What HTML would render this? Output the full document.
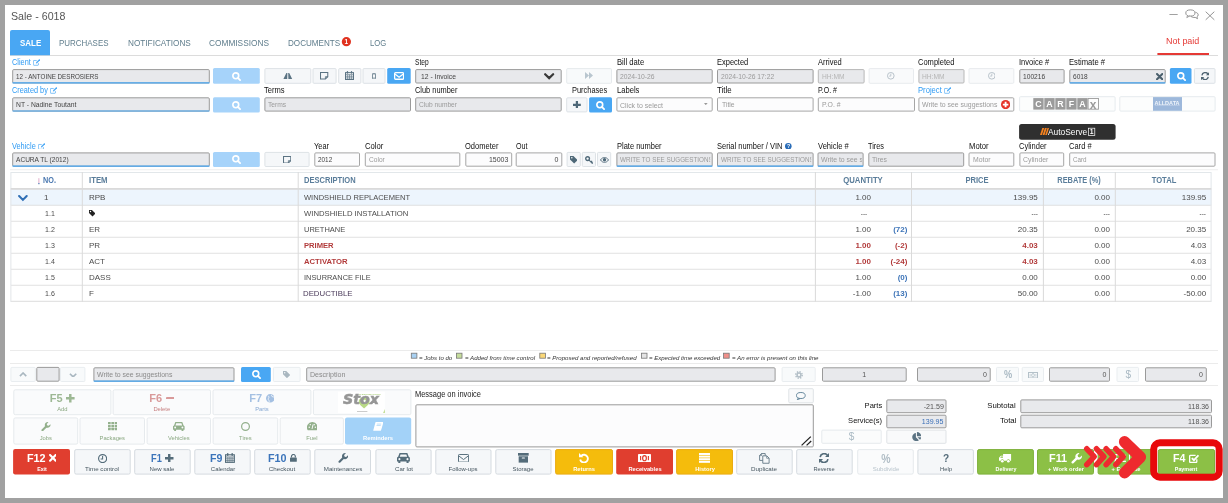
<!DOCTYPE html>
<html lang="en"><head><meta charset="utf-8"><title>Sale - 6018</title><style>
html,body{margin:0;padding:0}
body{width:1228px;height:503px;background:#a1a1a1;overflow:hidden;position:relative;font-family:"Liberation Sans",sans-serif;}
#w{position:absolute;left:0;top:0;width:1228px;height:503px;will-change:transform;}
#w>div,#w>span{position:absolute;box-sizing:border-box}
.t{position:absolute;white-space:nowrap;line-height:1;}
div>div{position:absolute}
</style></head><body><div id="w">
<svg style="position:absolute;left:0;top:0" width="1228" height="503" viewBox="0 0 1228 503"><rect x="5.00" y="5.00" width="1218.00" height="493.00" fill="#fff"/><rect x="1169.40" y="14.00" width="8.30" height="0.80" fill="#8a8a8a"/><rect x="10.00" y="55.00" width="1208.00" height="1.00" fill="#dcdcdc"/><path d="M10.00 55.30V32.00q0-2.0 2.0-2.0H48.00q2.0 0 2.0 2.0V55.30z" fill="#49a7f3"/><ellipse cx="346.40" cy="41.70" rx="4.60" ry="4.60" fill="#e0321f"/><rect x="1157.40" y="53.00" width="51.60" height="2.00" fill="#e53935"/><rect x="12.70" y="69.60" width="196.60" height="13.40" rx="1.00" fill="#e8e9ec" stroke="#9a9a9a" stroke-width="1.0"/><path d="M12.50 82.90H209.50" stroke="#49a7f3" stroke-width="1.2" fill="none"/><rect x="213.00" y="68.10" width="46.80" height="15.70" rx="1.5" fill="#a6d3fa"/><rect x="264.90" y="68.60" width="45.90" height="14.70" rx="1.00" fill="#f5f7f9" stroke="#dde2e6" stroke-width="1.0"/><rect x="313.00" y="68.60" width="23.10" height="14.70" rx="1.00" fill="#f5f7f9" stroke="#dde2e6" stroke-width="1.0"/><rect x="338.70" y="68.60" width="22.20" height="14.70" rx="1.00" fill="#f5f7f9" stroke="#dde2e6" stroke-width="1.0"/><rect x="363.00" y="68.60" width="22.00" height="14.70" rx="1.00" fill="#f5f7f9" stroke="#dde2e6" stroke-width="1.0"/><rect x="387.20" y="68.10" width="23.50" height="15.70" rx="1.5" fill="#49a7f3"/><rect x="415.70" y="69.60" width="145.50" height="13.40" rx="1.00" fill="#e8e9ec" stroke="#9a9a9a" stroke-width="1.0"/><rect x="566.70" y="68.60" width="44.80" height="14.70" rx="1.00" fill="#f8fafb" stroke="#e6eaed" stroke-width="1.0"/><rect x="616.90" y="69.60" width="95.30" height="13.40" rx="1.00" fill="#e8e9ec" stroke="#9a9a9a" stroke-width="1.0"/><rect x="717.50" y="69.60" width="95.60" height="13.40" rx="1.00" fill="#e8e9ec" stroke="#9a9a9a" stroke-width="1.0"/><rect x="818.30" y="69.60" width="45.80" height="13.40" rx="1.00" fill="#e8e9ec" stroke="#b8b8b8" stroke-width="1.0"/><rect x="869.10" y="68.60" width="44.40" height="14.70" rx="1.00" fill="#f9fafb" stroke="#e8ebee" stroke-width="1.0"/><rect x="918.90" y="69.60" width="45.10" height="13.40" rx="1.00" fill="#e8e9ec" stroke="#b8b8b8" stroke-width="1.0"/><rect x="969.00" y="68.60" width="44.80" height="14.70" rx="1.00" fill="#f9fafb" stroke="#e8ebee" stroke-width="1.0"/><rect x="1019.80" y="69.60" width="44.30" height="13.40" rx="1.00" fill="#e8e9ec" stroke="#9a9a9a" stroke-width="1.0"/><rect x="1069.80" y="69.60" width="95.40" height="13.40" rx="1.00" fill="#e8e9ec" stroke="#9a9a9a" stroke-width="1.0"/><path d="M1069.60 82.90H1165.40" stroke="#49a7f3" stroke-width="1.2" fill="none"/><rect x="1169.90" y="68.10" width="21.60" height="15.70" rx="1.5" fill="#49a7f3"/><rect x="1194.40" y="68.60" width="20.60" height="14.70" rx="1.00" fill="#f5f7f9" stroke="#dde2e6" stroke-width="1.0"/><rect x="12.70" y="97.80" width="196.60" height="13.30" rx="1.00" fill="#e8e9ec" stroke="#9a9a9a" stroke-width="1.0"/><path d="M12.50 111.00H209.50" stroke="#49a7f3" stroke-width="1.2" fill="none"/><rect x="213.00" y="97.30" width="46.80" height="15.10" rx="1.5" fill="#a6d3fa"/><rect x="264.90" y="97.80" width="145.60" height="13.30" rx="1.00" fill="#e8e9ec" stroke="#9a9a9a" stroke-width="1.0"/><rect x="415.70" y="97.80" width="145.50" height="13.30" rx="1.00" fill="#e8e9ec" stroke="#9a9a9a" stroke-width="1.0"/><rect x="566.70" y="97.80" width="20.30" height="14.10" rx="1.00" fill="#f5f7f9" stroke="#dde2e6" stroke-width="1.0"/><rect x="589.10" y="97.30" width="22.90" height="15.10" rx="1.5" fill="#49a7f3"/><rect x="616.90" y="97.80" width="95.30" height="13.30" rx="1.00" fill="#fcfcfd" stroke="#a6a6a6" stroke-width="1.0"/><rect x="717.50" y="97.80" width="95.60" height="13.30" rx="1.00" fill="#fcfcfd" stroke="#a6a6a6" stroke-width="1.0"/><rect x="818.30" y="97.80" width="96.20" height="13.30" rx="1.00" fill="#fcfcfd" stroke="#a6a6a6" stroke-width="1.0"/><rect x="918.90" y="97.80" width="94.90" height="13.30" rx="1.00" fill="#fcfcfd" stroke="#a6a6a6" stroke-width="1.0"/><rect x="1019.60" y="96.70" width="95.50" height="14.40" rx="1.00" fill="#fcfdfd" stroke="#e6ebee" stroke-width="1.0"/><rect x="1119.80" y="96.70" width="95.30" height="14.40" rx="1.00" fill="#fcfdfd" stroke="#e6ebee" stroke-width="1.0"/><rect x="1153.00" y="97.10" width="29.00" height="13.70" fill="#9db8db"/><rect x="1154.80" y="105.30" width="25.00" height="0.50" fill="#c9d7eb"/><rect x="1019.10" y="123.90" width="96.50" height="15.90" rx="2.5" fill="#2f2f2f"/><rect x="12.70" y="152.90" width="196.60" height="13.30" rx="1.00" fill="#e8e9ec" stroke="#9a9a9a" stroke-width="1.0"/><path d="M12.50 166.10H209.50" stroke="#49a7f3" stroke-width="1.2" fill="none"/><rect x="213.00" y="151.90" width="46.80" height="15.10" rx="1.5" fill="#a6d3fa"/><rect x="264.90" y="152.40" width="44.20" height="14.10" rx="1.00" fill="#f5f7f9" stroke="#dde2e6" stroke-width="1.0"/><rect x="314.80" y="152.90" width="44.70" height="13.30" rx="1.00" fill="#fcfcfd" stroke="#a6a6a6" stroke-width="1.0"/><rect x="365.30" y="152.90" width="94.50" height="13.30" rx="1.00" fill="#fcfcfd" stroke="#a6a6a6" stroke-width="1.0"/><rect x="465.80" y="152.90" width="45.90" height="13.30" rx="1.00" fill="#fcfcfd" stroke="#a6a6a6" stroke-width="1.0"/><rect x="516.20" y="152.90" width="45.60" height="13.30" rx="1.00" fill="#fcfcfd" stroke="#a6a6a6" stroke-width="1.0"/><rect x="567.10" y="152.40" width="13.20" height="14.10" rx="1.00" fill="#f5f7f9" stroke="#dde2e6" stroke-width="1.0"/><rect x="582.30" y="152.40" width="13.20" height="14.10" rx="1.00" fill="#f5f7f9" stroke="#dde2e6" stroke-width="1.0"/><rect x="597.50" y="152.40" width="13.20" height="14.10" rx="1.00" fill="#f5f7f9" stroke="#dde2e6" stroke-width="1.0"/><rect x="616.90" y="152.90" width="95.30" height="13.30" rx="1.00" fill="#e8e9ec" stroke="#9a9a9a" stroke-width="1.0"/><path d="M616.70 166.10H712.40" stroke="#49a7f3" stroke-width="1.2" fill="none"/><rect x="717.50" y="152.90" width="95.60" height="13.30" rx="1.00" fill="#e8e9ec" stroke="#9a9a9a" stroke-width="1.0"/><path d="M717.30 166.10H813.30" stroke="#49a7f3" stroke-width="1.2" fill="none"/><rect x="818.00" y="152.90" width="45.10" height="13.30" rx="1.00" fill="#e8e9ec" stroke="#9a9a9a" stroke-width="1.0"/><path d="M817.80 166.10H863.30" stroke="#49a7f3" stroke-width="1.2" fill="none"/><rect x="868.80" y="152.90" width="94.90" height="13.30" rx="1.00" fill="#e8e9ec" stroke="#9a9a9a" stroke-width="1.0"/><rect x="969.00" y="152.90" width="44.80" height="13.30" rx="1.00" fill="#fcfcfd" stroke="#a6a6a6" stroke-width="1.0"/><rect x="1019.90" y="152.90" width="43.80" height="13.30" rx="1.00" fill="#fcfcfd" stroke="#a6a6a6" stroke-width="1.0"/><rect x="1069.70" y="152.90" width="145.30" height="13.30" rx="1.00" fill="#fcfcfd" stroke="#a6a6a6" stroke-width="1.0"/><rect x="10.00" y="169.40" width="1208.00" height="0.80" fill="#e9e9e9"/><rect x="10.90" y="172.50" width="1200.20" height="17.00" rx="0.00" fill="#fff" stroke="#e2e7ea" stroke-width="1.0"/><path d="M10.70 189.00H1211.30" stroke="#dadada" stroke-width="2.0" fill="none"/><rect x="38.50" y="178.20" width="0.80" height="5.00" fill="#d99abf"/><rect x="38.30" y="183.00" width="1.20" height="1.20" fill="#4a78b0"/><rect x="10.40" y="189.80" width="1201.20" height="16.00" fill="#edf5fd"/><path d="M10.70 205.30H1211.30" stroke="#dcdcdc" stroke-width="1.0" fill="none"/><path d="M10.90 189.80V205.80" stroke="#e2e5e8" stroke-width="1.0" fill="none"/><path d="M1211.10 189.80V205.80" stroke="#e2e5e8" stroke-width="1.0" fill="none"/><rect x="10.40" y="205.80" width="1201.20" height="16.00" fill="#fff"/><path d="M10.70 221.30H1211.30" stroke="#dcdcdc" stroke-width="1.0" fill="none"/><path d="M10.90 205.80V221.80" stroke="#e2e5e8" stroke-width="1.0" fill="none"/><path d="M1211.10 205.80V221.80" stroke="#e2e5e8" stroke-width="1.0" fill="none"/><rect x="10.40" y="221.80" width="1201.20" height="16.00" fill="#fff"/><path d="M10.70 237.30H1211.30" stroke="#dcdcdc" stroke-width="1.0" fill="none"/><path d="M10.90 221.80V237.80" stroke="#e2e5e8" stroke-width="1.0" fill="none"/><path d="M1211.10 221.80V237.80" stroke="#e2e5e8" stroke-width="1.0" fill="none"/><rect x="10.40" y="237.80" width="1201.20" height="16.00" fill="#fff"/><path d="M10.70 253.30H1211.30" stroke="#dcdcdc" stroke-width="1.0" fill="none"/><path d="M10.90 237.80V253.80" stroke="#e2e5e8" stroke-width="1.0" fill="none"/><path d="M1211.10 237.80V253.80" stroke="#e2e5e8" stroke-width="1.0" fill="none"/><rect x="10.40" y="253.80" width="1201.20" height="16.00" fill="#fff"/><path d="M10.70 269.30H1211.30" stroke="#dcdcdc" stroke-width="1.0" fill="none"/><path d="M10.90 253.80V269.80" stroke="#e2e5e8" stroke-width="1.0" fill="none"/><path d="M1211.10 253.80V269.80" stroke="#e2e5e8" stroke-width="1.0" fill="none"/><rect x="10.40" y="269.80" width="1201.20" height="16.00" fill="#fff"/><path d="M10.70 285.30H1211.30" stroke="#dcdcdc" stroke-width="1.0" fill="none"/><path d="M10.90 269.80V285.80" stroke="#e2e5e8" stroke-width="1.0" fill="none"/><path d="M1211.10 269.80V285.80" stroke="#e2e5e8" stroke-width="1.0" fill="none"/><rect x="10.40" y="285.80" width="1201.20" height="16.00" fill="#fff"/><path d="M10.70 301.30H1211.30" stroke="#dcdcdc" stroke-width="1.0" fill="none"/><path d="M10.90 285.80V301.80" stroke="#e2e5e8" stroke-width="1.0" fill="none"/><path d="M1211.10 285.80V301.80" stroke="#e2e5e8" stroke-width="1.0" fill="none"/><rect x="81.80" y="172.00" width="1.00" height="129.60" fill="#dadada"/><rect x="297.70" y="172.00" width="1.00" height="129.60" fill="#dadada"/><rect x="814.90" y="172.00" width="1.00" height="129.60" fill="#dadada"/><rect x="911.00" y="172.00" width="1.00" height="129.60" fill="#dadada"/><rect x="1042.90" y="172.00" width="1.00" height="129.60" fill="#dadada"/><rect x="1114.80" y="172.00" width="1.00" height="129.60" fill="#dadada"/><rect x="10.00" y="350.20" width="1208.00" height="0.80" fill="#e6e6e6"/><rect x="10.00" y="363.20" width="1208.00" height="0.80" fill="#e6e6e6"/><rect x="10.00" y="385.20" width="1208.00" height="0.80" fill="#e6e6e6"/><rect x="10.90" y="367.40" width="24.40" height="14.10" rx="1.00" fill="#f8fafb" stroke="#e9edf0" stroke-width="1.0"/><rect x="36.80" y="367.40" width="22.30" height="13.80" rx="1.00" fill="#e8e9ec" stroke="#9a9a9a" stroke-width="1.0"/><rect x="60.50" y="367.40" width="24.40" height="14.10" rx="1.00" fill="#f8fafb" stroke="#e9edf0" stroke-width="1.0"/><rect x="93.90" y="367.80" width="140.10" height="13.40" rx="1.00" fill="#e8e9ec" stroke="#9a9a9a" stroke-width="1.0"/><path d="M93.70 381.10H234.20" stroke="#49a7f3" stroke-width="1.2" fill="none"/><rect x="241.00" y="366.90" width="29.80" height="15.10" rx="1.5" fill="#49a7f3"/><rect x="273.40" y="367.40" width="26.70" height="14.10" rx="1.00" fill="#f8fafb" stroke="#e9edf0" stroke-width="1.0"/><rect x="306.70" y="367.80" width="468.40" height="13.40" rx="1.00" fill="#e8e9ec" stroke="#9a9a9a" stroke-width="1.0"/><rect x="782.10" y="367.40" width="33.10" height="14.10" rx="1.00" fill="#f8fafb" stroke="#e9edf0" stroke-width="1.0"/><rect x="822.50" y="367.80" width="83.70" height="13.40" rx="1.00" fill="#e8e9ec" stroke="#9a9a9a" stroke-width="1.0"/><rect x="917.50" y="367.80" width="72.70" height="13.40" rx="1.00" fill="#e8e9ec" stroke="#9a9a9a" stroke-width="1.0"/><rect x="996.50" y="367.40" width="22.00" height="14.10" rx="1.00" fill="#f8fafb" stroke="#e9edf0" stroke-width="1.0"/><rect x="1022.20" y="367.40" width="21.30" height="14.10" rx="1.00" fill="#f8fafb" stroke="#e9edf0" stroke-width="1.0"/><rect x="1049.50" y="367.80" width="60.00" height="13.40" rx="1.00" fill="#e8e9ec" stroke="#9a9a9a" stroke-width="1.0"/><rect x="1117.00" y="367.40" width="21.50" height="14.10" rx="1.00" fill="#f8fafb" stroke="#e9edf0" stroke-width="1.0"/><rect x="1145.50" y="367.80" width="60.80" height="13.40" rx="1.00" fill="#e8e9ec" stroke="#9a9a9a" stroke-width="1.0"/><rect x="13.80" y="389.80" width="97.10" height="24.90" rx="1.50" fill="#fafbfc" stroke="#e6eaed" stroke-width="1.0"/><rect x="113.10" y="389.80" width="97.40" height="24.90" rx="1.50" fill="#fafbfc" stroke="#e6eaed" stroke-width="1.0"/><rect x="213.00" y="389.80" width="97.90" height="24.90" rx="1.50" fill="#fafbfc" stroke="#e6eaed" stroke-width="1.0"/><rect x="313.40" y="389.80" width="97.50" height="24.90" rx="1.50" fill="#fafbfc" stroke="#e6eaed" stroke-width="1.0"/><rect x="337.90" y="391.60" width="46.90" height="21.40" fill="#fff"/><rect x="357.00" y="411.10" width="10.40" height="0.60" fill="#a8a8a8"/><rect x="13.80" y="417.90" width="63.90" height="26.20" rx="1.50" fill="#fafbfc" stroke="#e6eaed" stroke-width="1.0"/><rect x="80.00" y="417.90" width="64.50" height="26.20" rx="1.50" fill="#fafbfc" stroke="#e6eaed" stroke-width="1.0"/><rect x="147.10" y="417.90" width="63.40" height="26.20" rx="1.50" fill="#fafbfc" stroke="#e6eaed" stroke-width="1.0"/><rect x="213.10" y="417.90" width="64.60" height="26.20" rx="1.50" fill="#fafbfc" stroke="#e6eaed" stroke-width="1.0"/><rect x="280.20" y="417.90" width="63.20" height="26.20" rx="1.50" fill="#fafbfc" stroke="#e6eaed" stroke-width="1.0"/><rect x="345.00" y="417.40" width="66.20" height="27.20" rx="2.0" fill="#a3d2f8"/><rect x="788.80" y="388.70" width="24.50" height="14.10" rx="1.00" fill="#f9fafb" stroke="#dfe3e6" stroke-width="1.0"/><rect x="415.90" y="404.80" width="397.40" height="42.10" rx="1.00" fill="#fcfcfd" stroke="#9a9a9a" stroke-width="1.0"/><rect x="886.80" y="399.90" width="59.20" height="12.80" rx="1.00" fill="#e8e9ec" stroke="#9a9a9a" stroke-width="1.0"/><rect x="886.80" y="415.20" width="59.20" height="12.60" rx="1.00" fill="#e8e9ec" stroke="#9a9a9a" stroke-width="1.0"/><rect x="821.80" y="430.10" width="59.40" height="13.20" rx="1.00" fill="#fbfcfc" stroke="#e6eaed" stroke-width="1.0"/><rect x="886.80" y="430.10" width="59.20" height="13.20" rx="1.00" fill="#f9fafb" stroke="#dfe3e6" stroke-width="1.0"/><rect x="1020.80" y="399.90" width="190.70" height="12.80" rx="1.00" fill="#e8e9ec" stroke="#9a9a9a" stroke-width="1.0"/><rect x="1020.80" y="415.20" width="190.70" height="12.60" rx="1.00" fill="#e8e9ec" stroke="#9a9a9a" stroke-width="1.0"/><rect x="13.10" y="449.10" width="56.90" height="25.50" rx="2.0" fill="#e03e2f"/><rect x="74.70" y="449.60" width="55.50" height="24.50" rx="1.50" fill="#f5f7f9" stroke="#d5dbe0" stroke-width="1.0"/><rect x="134.70" y="449.60" width="55.50" height="24.50" rx="1.50" fill="#f5f7f9" stroke="#d5dbe0" stroke-width="1.0"/><rect x="194.80" y="449.60" width="55.40" height="24.50" rx="1.50" fill="#f5f7f9" stroke="#d5dbe0" stroke-width="1.0"/><rect x="254.70" y="449.60" width="55.50" height="24.50" rx="1.50" fill="#f5f7f9" stroke="#d5dbe0" stroke-width="1.0"/><rect x="314.80" y="449.60" width="55.70" height="24.50" rx="1.50" fill="#f5f7f9" stroke="#d5dbe0" stroke-width="1.0"/><rect x="375.90" y="449.60" width="55.20" height="24.50" rx="1.50" fill="#f5f7f9" stroke="#d5dbe0" stroke-width="1.0"/><rect x="435.80" y="449.60" width="55.20" height="24.50" rx="1.50" fill="#f5f7f9" stroke="#d5dbe0" stroke-width="1.0"/><rect x="495.80" y="449.60" width="55.20" height="24.50" rx="1.50" fill="#f5f7f9" stroke="#d5dbe0" stroke-width="1.0"/><rect x="555.60" y="449.60" width="56.90" height="24.50" rx="1.50" fill="#f5bc0c" stroke="#eaab12" stroke-width="1.0"/><rect x="616.20" y="449.10" width="56.80" height="25.50" rx="2.0" fill="#e03e2f"/><rect x="676.60" y="449.60" width="55.90" height="24.50" rx="1.50" fill="#f5bc0c" stroke="#eaab12" stroke-width="1.0"/><rect x="736.70" y="449.60" width="55.50" height="24.50" rx="1.50" fill="#f5f7f9" stroke="#d5dbe0" stroke-width="1.0"/><rect x="796.70" y="449.60" width="55.50" height="24.50" rx="1.50" fill="#f5f7f9" stroke="#d5dbe0" stroke-width="1.0"/><rect x="857.70" y="449.60" width="55.60" height="24.50" rx="1.50" fill="#fafbfc" stroke="#e6eaed" stroke-width="1.0"/><rect x="917.90" y="449.60" width="55.50" height="24.50" rx="1.50" fill="#f5f7f9" stroke="#d5dbe0" stroke-width="1.0"/><rect x="977.60" y="449.60" width="55.80" height="24.50" rx="1.50" fill="#8cc046" stroke="#7db03a" stroke-width="1.0"/><rect x="1037.50" y="449.60" width="56.00" height="24.50" rx="1.50" fill="#8cc046" stroke="#7db03a" stroke-width="1.0"/><rect x="1098.10" y="449.60" width="55.40" height="24.50" rx="1.50" fill="#8cc046" stroke="#7db03a" stroke-width="1.0"/><rect x="1158.40" y="449.60" width="56.10" height="24.50" rx="1.50" fill="#8cc046" stroke="#7db03a" stroke-width="1.0"/></svg>
<span class="t" style="top:11.00px;font-size:10.9px;color:#555;left:10.60px;transform:scaleX(0.9766);transform-origin:0 50%;">Sale - 6018</span>
<svg style="position:absolute;left:1185px;top:8.5px" width="14" height="11" viewBox="0 0 14 11"><ellipse cx="5.4" cy="4" rx="4.6" ry="3.1" fill="#fff" stroke="#888" stroke-width=".9"/><path d="M2.6 6.4L1.8 8.6 4.6 7" fill="#fff" stroke="#888" stroke-width=".8"/><path d="M10.4 3.2c1.8.5 2.8 1.500 2.800 2.600 0 .9-.5 1.600-1.300 2.100l.6 1.800-2.300-1.300c-1.800.2-3.400-.2-4.400-1.200" fill="none" stroke="#888" stroke-width=".9"/></svg>
<svg style="position:absolute;left:1204.5px;top:11.3px" width="10" height="9.500" viewBox="0 0 10 9.500"><path d="M.7.7l8.600 8.100M9.300.7L.7 8.800" stroke="#888" stroke-width=".9" fill="none"/></svg>
<span class="t" style="top:38.00px;font-size:9.7px;color:#fff;font-weight:700;left:19.50px;transform:scaleX(0.8203);transform-origin:0 50%;">SALE</span>
<span class="t" style="top:38.00px;font-size:9.7px;color:#5f7d8c;left:59.20px;transform:scaleX(0.8209);transform-origin:0 50%;">PURCHASES</span>
<span class="t" style="top:38.00px;font-size:9.7px;color:#5f7d8c;left:127.60px;transform:scaleX(0.8476);transform-origin:0 50%;">NOTIFICATIONS</span>
<span class="t" style="top:38.00px;font-size:9.7px;color:#5f7d8c;left:209.00px;transform:scaleX(0.8573);transform-origin:0 50%;">COMMISSIONS</span>
<span class="t" style="top:38.00px;font-size:9.7px;color:#5f7d8c;left:287.70px;transform:scaleX(0.8360);transform-origin:0 50%;">DOCUMENTS</span>
<span class="t" style="top:38.00px;font-size:9.7px;color:#5f7d8c;left:370.00px;transform:scaleX(0.7915);transform-origin:0 50%;">LOG</span>
<span class="t" style="top:39.00px;font-size:6.5px;color:#fff;font-weight:700;left:346.40px;transform:translateX(-50%);">1</span>
<span class="t" style="top:36.00px;font-size:9.5px;color:#e53935;left:1166.00px;transform:scaleX(0.9409);transform-origin:0 50%;">Not paid</span>
<span class="t" style="top:59.00px;font-size:8.2px;color:#2f9bf4;left:12.20px;transform:scaleX(0.8979);transform-origin:0 50%;">Client</span>
<svg style="position:absolute;left:32.70px;top:58.82px" width="7.40" height="6.75" viewBox="0 0 16 14.6"><path d="M11.800 9v3.400c0 .7-.5 1.200-1.200 1.200H2c-.7 0-1.200-.5-1.200-1.200V4.400c0-.7.500-1.200 1.200-1.200h6" fill="none" stroke="#2f9bf4" stroke-width="1.3"/><path fill="#2f9bf4" d="M13.800.2l2 2-7 7-2.600.6.600-2.600z" opacity=".85"/></svg>
<span class="t" style="top:73.00px;font-size:7.0px;color:#444;left:15.80px;transform:scaleX(0.8923);transform-origin:0 50%;">12 - ANTOINE DESROSIERS</span>
<svg style="position:absolute;left:232.20px;top:71.75px" width="9.00" height="9.00" viewBox="0 0 16 16"><circle cx="6.7" cy="6.7" r="5.2" fill="none" stroke="#fff" stroke-width="2.9"/><path d="M10.8 10.8L14.4 14.4" fill="none" stroke="#fff" stroke-width="3.2" stroke-linecap="round"/></svg>
<svg style="position:absolute;left:283.05px;top:72.53px" width="9.60" height="6.84" viewBox="0 0 16 11.4"><path fill="#5b7383" d="M5.600 0L0 11.400h7L7.300 0zM10.400 0L16 11.400H9L8.700 0z"/></svg>
<svg style="position:absolute;left:320.40px;top:72.21px" width="8.30" height="7.47" viewBox="0 0 16 14.4"><path d="M1 1h14v8l-4.600 4.400H1z" fill="none" stroke="#5b7383" stroke-width="2"/><path d="M10.400 13.400V9h4.600" fill="none" stroke="#5b7383" stroke-width="1.6"/></svg>
<svg style="position:absolute;left:345.30px;top:71.05px" width="9.00" height="9.00" viewBox="0 0 16 16"><rect x=".9" y="2.900" width="14.200" height="12.200" fill="none" stroke="#5b7383" stroke-width="1.8"/><path d="M.9 6.400h14.200M4.600 6.400v8.700M8 6.400v8.700M11.400 6.400v8.700M.9 9.400h14.200M.9 12.300h14.200" fill="none" stroke="#5b7383" stroke-width="1.1"/><rect fill="#5b7383" x="3.200" y="0" width="2.400" height="4.800" rx="1.200"/><rect fill="#5b7383" x="10.400" y="0" width="2.400" height="4.800" rx="1.200"/></svg>
<svg style="position:absolute;left:372.00px;top:72.75px" width="4.00" height="6.40" viewBox="0 0 10 16"><rect x="1.100" y="1.100" width="7.800" height="13.800" rx="1.800" fill="none" stroke="#5b7383" stroke-width="2"/><path d="M1.500 3.400h7M1.500 12h7" fill="none" stroke="#5b7383" stroke-width="1"/></svg>
<svg style="position:absolute;left:394.10px;top:72.15px" width="10.20" height="7.90" viewBox="0 0 16 12.4"><rect x="1" y="1" width="14" height="10.400" rx="1.400" fill="none" stroke="#fff" stroke-width="2"/><path d="M1.400 3.200L8 8.200l6.600-5" fill="none" stroke="#fff" stroke-width="2"/></svg>
<span class="t" style="top:59.00px;font-size:8.2px;color:#111;left:415.20px;transform:scaleX(0.8074);transform-origin:0 50%;">Step</span>
<span class="t" style="top:73.00px;font-size:7.0px;color:#444;left:420.60px;transform:scaleX(0.9672);transform-origin:0 50%;">12 - Invoice</span>
<svg style="position:absolute;left:544.25px;top:72.82px" width="10.30" height="6.76" viewBox="0 0 16 10.5"><path d="M1.800 1.800L8 8l6.200-6.200" fill="none" stroke="#383838" stroke-width="3.4" stroke-linecap="round" stroke-linejoin="miter"/></svg>
<svg style="position:absolute;left:584.70px;top:72.40px" width="8.00" height="7.00" viewBox="0 0 16 11" preserveAspectRatio="none"><path fill="#b9c6cf" d="M0 0L8 5.500 0 11zM8 0l8 5.500L8 11z"/></svg>
<span class="t" style="top:59.00px;font-size:8.2px;color:#111;left:616.50px;transform:scaleX(0.9334);transform-origin:0 50%;">Bill date</span>
<span class="t" style="top:73.00px;font-size:7.0px;color:#9a9a9a;left:620.20px;transform:scaleX(0.9661);transform-origin:0 50%;">2024-10-26</span>
<span class="t" style="top:59.00px;font-size:8.2px;color:#111;left:717.20px;transform:scaleX(0.9139);transform-origin:0 50%;">Expected</span>
<span class="t" style="top:73.00px;font-size:7.0px;color:#9a9a9a;left:721.00px;transform:scaleX(0.9624);transform-origin:0 50%;">2024-10-26 17:22</span>
<span class="t" style="top:59.00px;font-size:8.2px;color:#111;left:817.80px;transform:scaleX(0.9176);transform-origin:0 50%;">Arrived</span>
<span class="t" style="top:73.00px;font-size:7.0px;color:#b5b5b5;left:821.60px;transform:scaleX(0.9528);transform-origin:0 50%;">HH:MM</span>
<svg style="position:absolute;left:887.40px;top:72.20px" width="7.60" height="7.60" viewBox="0 0 16 16"><circle cx="8" cy="8" r="7" fill="none" stroke="#b5c0c8" stroke-width="2"/><path d="M8 3.600V8.600H4.600" fill="none" stroke="#b5c0c8" stroke-width="1.8"/></svg>
<span class="t" style="top:59.00px;font-size:8.2px;color:#111;left:918.20px;transform:scaleX(0.9190);transform-origin:0 50%;">Completed</span>
<span class="t" style="top:73.00px;font-size:7.0px;color:#b5b5b5;left:922.20px;transform:scaleX(0.9528);transform-origin:0 50%;">HH:MM</span>
<svg style="position:absolute;left:987.60px;top:72.20px" width="7.60" height="7.60" viewBox="0 0 16 16"><circle cx="8" cy="8" r="7" fill="none" stroke="#b5c0c8" stroke-width="2"/><path d="M8 3.600V8.600H4.600" fill="none" stroke="#b5c0c8" stroke-width="1.8"/></svg>
<span class="t" style="top:59.00px;font-size:8.2px;color:#111;left:1019.30px;transform:scaleX(0.9213);transform-origin:0 50%;">Invoice #</span>
<span class="t" style="top:73.00px;font-size:7.0px;color:#444;left:1023.00px;transform:scaleX(0.9504);transform-origin:0 50%;">100216</span>
<span class="t" style="top:59.00px;font-size:8.2px;color:#111;left:1069.30px;transform:scaleX(0.9305);transform-origin:0 50%;">Estimate #</span>
<span class="t" style="top:73.00px;font-size:7.0px;color:#444;left:1073.00px;transform:scaleX(0.9372);transform-origin:0 50%;">6018</span>
<svg style="position:absolute;left:1155.85px;top:72.85px" width="7.30" height="7.30" viewBox="0 0 16 16"><path d="M2.200 2.200L13.800 13.800M13.800 2.200L2.200 13.800" fill="none" stroke="#4a5f6c" stroke-width="4.4" stroke-linecap="round"/></svg>
<svg style="position:absolute;left:1176.50px;top:71.75px" width="9.00" height="9.00" viewBox="0 0 16 16"><circle cx="6.7" cy="6.7" r="5.2" fill="none" stroke="#fff" stroke-width="2.9"/><path d="M10.8 10.8L14.4 14.4" fill="none" stroke="#fff" stroke-width="3.2" stroke-linecap="round"/></svg>
<svg style="position:absolute;left:1200.80px;top:71.60px" width="8.20" height="8.20" viewBox="0 0 16 16"><path d="M14.200 9.600a6.400 6.400 0 0 1-11.600 2.600" fill="none" stroke="#4e6472" stroke-width="2.6"/><path d="M1.800 6.400a6.400 6.400 0 0 1 11.600-2.600" fill="none" stroke="#4e6472" stroke-width="2.6"/><path fill="#4e6472" d="M16 0v6.400H9.600z"/><path fill="#4e6472" d="M0 16V9.600h6.400z"/></svg>
<span class="t" style="top:87.00px;font-size:8.2px;color:#2f9bf4;left:12.20px;transform:scaleX(0.8936);transform-origin:0 50%;">Created by</span>
<svg style="position:absolute;left:49.70px;top:86.82px" width="7.40" height="6.75" viewBox="0 0 16 14.6"><path d="M11.800 9v3.400c0 .7-.5 1.200-1.200 1.200H2c-.7 0-1.200-.5-1.200-1.200V4.400c0-.7.500-1.200 1.200-1.200h6" fill="none" stroke="#2f9bf4" stroke-width="1.3"/><path fill="#2f9bf4" d="M13.800.2l2 2-7 7-2.600.6.600-2.600z" opacity=".85"/></svg>
<span class="t" style="top:101.00px;font-size:7.0px;color:#444;left:15.80px;transform:scaleX(0.9665);transform-origin:0 50%;">NT - Nadine Toutant</span>
<svg style="position:absolute;left:232.20px;top:100.65px" width="9.00" height="9.00" viewBox="0 0 16 16"><circle cx="6.7" cy="6.7" r="5.2" fill="none" stroke="#fff" stroke-width="2.9"/><path d="M10.8 10.8L14.4 14.4" fill="none" stroke="#fff" stroke-width="3.2" stroke-linecap="round"/></svg>
<span class="t" style="top:87.00px;font-size:8.2px;color:#111;left:264.40px;transform:scaleX(0.9239);transform-origin:0 50%;">Terms</span>
<span class="t" style="top:101.00px;font-size:7.0px;color:#9a9a9a;left:268.40px;transform:scaleX(0.9548);transform-origin:0 50%;">Terms</span>
<span class="t" style="top:87.00px;font-size:8.2px;color:#111;left:415.20px;transform:scaleX(0.9045);transform-origin:0 50%;">Club number</span>
<span class="t" style="top:101.00px;font-size:7.0px;color:#9a9a9a;left:418.60px;transform:scaleX(0.9481);transform-origin:0 50%;">Club number</span>
<span class="t" style="top:87.00px;font-size:8.2px;color:#111;left:571.50px;transform:scaleX(0.9099);transform-origin:0 50%;">Purchases</span>
<svg style="position:absolute;left:573.10px;top:100.60px" width="7.80" height="7.80" viewBox="0 0 16 16"><path fill="#4e6878" d="M5.7 0h4.6v5.7H16v4.6h-5.700V16H5.700v-5.700H0V5.700h5.700z"/></svg>
<svg style="position:absolute;left:596.35px;top:100.65px" width="9.00" height="9.00" viewBox="0 0 16 16"><circle cx="6.7" cy="6.7" r="5.2" fill="none" stroke="#fff" stroke-width="2.9"/><path d="M10.8 10.8L14.4 14.4" fill="none" stroke="#fff" stroke-width="3.2" stroke-linecap="round"/></svg>
<span class="t" style="top:87.00px;font-size:8.2px;color:#111;left:616.50px;transform:scaleX(0.9279);transform-origin:0 50%;">Labels</span>
<span class="t" style="top:102.00px;font-size:7.0px;color:#9a9a9a;left:620.00px;transform:scaleX(0.9957);transform-origin:0 50%;">Click to select</span>
<svg style="position:absolute;left:704.3px;top:103px" width="3.600" height="2.200" viewBox="0 0 5 3"><path d="M0 0h5L2.500 3z" fill="#999"/></svg>
<span class="t" style="top:87.00px;font-size:8.2px;color:#111;left:717.20px;transform:scaleX(0.9623);transform-origin:0 50%;">Title</span>
<span class="t" style="top:101.00px;font-size:7.0px;color:#9a9a9a;left:721.60px;transform:scaleX(0.9716);transform-origin:0 50%;">Title</span>
<span class="t" style="top:87.00px;font-size:8.2px;color:#111;left:817.80px;transform:scaleX(0.8575);transform-origin:0 50%;">P.O. #</span>
<span class="t" style="top:101.00px;font-size:7.0px;color:#9a9a9a;left:822.00px;transform:scaleX(0.9814);transform-origin:0 50%;">P.O. #</span>
<span class="t" style="top:87.00px;font-size:8.2px;color:#2f9bf4;left:918.20px;transform:scaleX(0.9339);transform-origin:0 50%;">Project</span>
<svg style="position:absolute;left:943.70px;top:86.82px" width="7.40" height="6.75" viewBox="0 0 16 14.6"><path d="M11.800 9v3.400c0 .7-.5 1.200-1.200 1.200H2c-.7 0-1.200-.5-1.200-1.200V4.400c0-.7.500-1.200 1.200-1.200h6" fill="none" stroke="#2f9bf4" stroke-width="1.3"/><path fill="#2f9bf4" d="M13.800.2l2 2-7 7-2.600.6.600-2.600z" opacity=".85"/></svg>
<span class="t" style="top:101.00px;font-size:7.0px;color:#9a9a9a;left:921.60px;transform:scaleX(0.9852);transform-origin:0 50%;">Write to see suggestions</span>
<svg style="position:absolute;left:1001.00px;top:99.70px" width="9.20" height="9.20" viewBox="0 0 16 16"><circle cx="8" cy="8" r="8" fill="#e53227"/><path fill="#fff" d="M6.400 3.200h3.200v3.200h3.200v3.200H9.600v3.200H6.400V9.600H3.200V6.400h3.200z"/></svg>
<svg style="position:absolute;left:1030px;top:96px" width="74" height="16" viewBox="1030 96 74 16" font-family="Liberation Sans, sans-serif" font-weight="700" text-anchor="middle"><rect x="1033.3" y="98.1" width="10.300" height="11.500" fill="#9b9b9b"/><text x="1038.45" y="107" font-size="8.800" fill="#fff">C</text><rect x="1044.3" y="98.1" width="10.300" height="11.500" fill="#9b9b9b"/><text x="1049.45" y="107" font-size="8.800" fill="#fff">A</text><rect x="1055.3" y="98.1" width="10.300" height="11.500" fill="#9b9b9b"/><text x="1060.45" y="107" font-size="8.800" fill="#fff">R</text><rect x="1066.3" y="98.1" width="10.300" height="11.500" fill="#9b9b9b"/><text x="1071.45" y="107" font-size="8.800" fill="#fff">F</text><rect x="1077.3" y="98.1" width="10.300" height="11.500" fill="#9b9b9b"/><text x="1082.45" y="107" font-size="8.800" fill="#fff">A</text><rect x="1088.100" y="98.500" width="10.400" height="10.700" fill="#fdfdfd" stroke="#9b9b9b" stroke-width=".9"/><text x="1093.200" y="109" font-size="12" fill="#9b9b9b">x</text></svg>
<span class="t" style="top:101.00px;font-size:5px;color:#eef3fa;font-weight:700;left:1167.30px;transform:translateX(-50%) scaleX(1.1016);">ALLDATA</span>
<svg style="position:absolute;left:1039.5px;top:128.4px" width="9" height="7" viewBox="0 0 9 7"><path d="M2.300 0h1.900L1.900 7H0zM4.900 0h1.900L4.500 7H2.600zM7.500 0h1.500L6.900 7H5.200z" fill="#f5821f"/></svg>
<span class="t" style="top:128.00px;font-size:8.6px;color:#fff;left:1047.90px;transform:scaleX(0.9766);transform-origin:0 50%;">AutoServe</span>
<svg style="position:absolute;left:1087px;top:127px" width="10" height="10" viewBox="1087 127 10 10"><rect x="1088.600" y="128.200" width="6.200" height="7.200" fill="none" stroke="#fff" stroke-width=".7"/></svg>
<span class="t" style="top:129.00px;font-size:6.8px;color:#fff;font-weight:700;left:1091.70px;transform:translateX(-50%);">1</span>
<span class="t" style="top:143.00px;font-size:8.2px;color:#2f9bf4;left:12.20px;transform:scaleX(0.9013);transform-origin:0 50%;">Vehicle</span>
<svg style="position:absolute;left:37.70px;top:142.72px" width="7.40" height="6.75" viewBox="0 0 16 14.6"><path d="M11.800 9v3.400c0 .7-.5 1.200-1.200 1.200H2c-.7 0-1.200-.5-1.200-1.200V4.400c0-.7.500-1.200 1.200-1.200h6" fill="none" stroke="#2f9bf4" stroke-width="1.3"/><path fill="#2f9bf4" d="M13.800.2l2 2-7 7-2.600.6.600-2.600z" opacity=".85"/></svg>
<span class="t" style="top:156.00px;font-size:7.0px;color:#444;left:15.80px;transform:scaleX(0.9388);transform-origin:0 50%;">ACURA TL (2012)</span>
<svg style="position:absolute;left:232.20px;top:155.25px" width="9.00" height="9.00" viewBox="0 0 16 16"><circle cx="6.7" cy="6.7" r="5.2" fill="none" stroke="#fff" stroke-width="2.9"/><path d="M10.8 10.8L14.4 14.4" fill="none" stroke="#fff" stroke-width="3.2" stroke-linecap="round"/></svg>
<svg style="position:absolute;left:282.85px;top:155.86px" width="8.30" height="7.47" viewBox="0 0 16 14.4"><path d="M1 1h14v8l-4.600 4.400H1z" fill="none" stroke="#5b7383" stroke-width="2"/><path d="M10.400 13.400V9h4.600" fill="none" stroke="#5b7383" stroke-width="1.6"/></svg>
<span class="t" style="top:143.00px;font-size:8.2px;color:#111;left:314.30px;transform:scaleX(0.9065);transform-origin:0 50%;">Year</span>
<span class="t" style="top:156.00px;font-size:7.0px;color:#444;left:318.00px;transform:scaleX(0.9115);transform-origin:0 50%;">2012</span>
<span class="t" style="top:143.00px;font-size:8.2px;color:#111;left:364.60px;transform:scaleX(0.9398);transform-origin:0 50%;">Color</span>
<span class="t" style="top:156.00px;font-size:7.0px;color:#9a9a9a;left:368.60px;transform:scaleX(0.9442);transform-origin:0 50%;">Color</span>
<span class="t" style="top:143.00px;font-size:8.2px;color:#111;left:465.00px;transform:scaleX(0.9174);transform-origin:0 50%;">Odometer</span>
<span class="t" style="top:156.00px;font-size:7.0px;color:#444;right:719.60px;">15003</span>
<span class="t" style="top:143.00px;font-size:8.2px;color:#111;left:515.80px;transform:scaleX(0.8634);transform-origin:0 50%;">Out</span>
<span class="t" style="top:156.00px;font-size:7.0px;color:#444;right:669.60px;">0</span>
<svg style="position:absolute;left:569.90px;top:156.00px" width="7.60" height="7.60" viewBox="0 0 16 16"><path fill="#4e6878" d="M0 0h7.200L16 8.800 8.800 16 0 7.200z"/><circle cx="3.800" cy="3.800" r="1.700" fill="#f5f7f9"/></svg>
<svg style="position:absolute;left:584.75px;top:155.65px" width="8.30" height="8.30" viewBox="0 0 16 16"><circle cx="5" cy="5" r="3.600" fill="none" stroke="#4e6878" stroke-width="2.6"/><path d="M7.800 7.800l6.800 6.800M11.600 11.600l2.200-2.200M14 14l1.600-1.600" fill="none" stroke="#4e6878" stroke-width="2.2"/></svg>
<svg style="position:absolute;left:599.60px;top:156.88px" width="9.00" height="5.85" viewBox="0 0 16 10.4"><path d="M.8 5.200C3 2 5.400.9 8 .9s5 1.100 7.200 4.300C13 8.400 10.600 9.500 8 9.500S3 8.400.8 5.200z" fill="none" stroke="#4e6878" stroke-width="1.6"/><circle cx="8" cy="5" r="3" fill="#4e6878"/></svg>
<span class="t" style="top:143.00px;font-size:8.2px;color:#111;left:616.50px;transform:scaleX(0.9158);transform-origin:0 50%;">Plate number</span>
<span class="t" style="top:156.00px;font-size:7.0px;color:#9a9a9a;left:620.20px;transform:scaleX(0.8973);transform-origin:0 50%;clip-path:inset(0 2.67px 0 0);">WRITE TO SEE SUGGESTIONS</span>
<span class="t" style="top:143.00px;font-size:8.2px;color:#111;left:717.20px;transform:scaleX(0.9153);transform-origin:0 50%;">Serial number / VIN</span>
<svg style="position:absolute;left:785.30px;top:142.60px" width="6.60" height="6.60" viewBox="0 0 16 16"><circle cx="8" cy="8" r="8" fill="#2a6db8"/></svg>
<span class="t" style="top:144.00px;font-size:5.2px;color:#fff;font-weight:700;left:788.60px;transform:translateX(-50%);">?</span>
<span class="t" style="top:156.00px;font-size:7.0px;color:#9a9a9a;left:720.80px;transform:scaleX(0.8973);transform-origin:0 50%;clip-path:inset(0 2.67px 0 0);">WRITE TO SEE SUGGESTIONS</span>
<span class="t" style="top:143.00px;font-size:8.2px;color:#111;left:817.80px;transform:scaleX(0.9268);transform-origin:0 50%;">Vehicle #</span>
<span class="t" style="top:156.00px;font-size:7.0px;color:#9a9a9a;left:821.20px;transform:scaleX(0.9852);transform-origin:0 50%;clip-path:inset(0 34.92px 0 0);">Write to see suggestions</span>
<span class="t" style="top:143.00px;font-size:8.2px;color:#111;left:868.40px;transform:scaleX(0.8943);transform-origin:0 50%;">Tires</span>
<span class="t" style="top:156.00px;font-size:7.0px;color:#9a9a9a;left:872.40px;transform:scaleX(0.9675);transform-origin:0 50%;">Tires</span>
<span class="t" style="top:143.00px;font-size:8.2px;color:#111;left:968.60px;transform:scaleX(0.9361);transform-origin:0 50%;">Motor</span>
<span class="t" style="top:156.00px;font-size:7.0px;color:#9a9a9a;left:972.60px;transform:scaleX(0.9829);transform-origin:0 50%;">Motor</span>
<span class="t" style="top:143.00px;font-size:8.2px;color:#111;left:1019.30px;transform:scaleX(0.9186);transform-origin:0 50%;">Cylinder</span>
<span class="t" style="top:156.00px;font-size:7.0px;color:#9a9a9a;left:1022.80px;transform:scaleX(0.9888);transform-origin:0 50%;">Cylinder</span>
<span class="t" style="top:143.00px;font-size:8.2px;color:#111;left:1069.30px;transform:scaleX(0.9195);transform-origin:0 50%;">Card #</span>
<span class="t" style="top:156.00px;font-size:7.0px;color:#9a9a9a;left:1073.00px;transform:scaleX(0.8955);transform-origin:0 50%;">Card</span>
<span class="t" style="top:177.00px;font-size:8.2px;color:#4a78b0;font-weight:700;left:43.40px;transform:scaleX(0.8858);transform-origin:0 50%;">NO.</span>
<span class="t" style="top:177.00px;font-size:8.2px;color:#5a7d9a;font-weight:700;left:88.50px;transform:scaleX(0.9457);transform-origin:0 50%;">ITEM</span>
<span class="t" style="top:177.00px;font-size:8.2px;color:#5a7d9a;font-weight:700;left:304.40px;transform:scaleX(0.9219);transform-origin:0 50%;">DESCRIPTION</span>
<span class="t" style="top:177.00px;font-size:8.2px;color:#5a7d9a;font-weight:700;left:863.30px;transform:translateX(-50%) scaleX(0.9460);">QUANTITY</span>
<span class="t" style="top:177.00px;font-size:8.2px;color:#5a7d9a;font-weight:700;left:977.40px;transform:translateX(-50%) scaleX(0.9268);">PRICE</span>
<span class="t" style="top:177.00px;font-size:8.2px;color:#5a7d9a;font-weight:700;left:1079.40px;transform:translateX(-50%) scaleX(0.9030);">REBATE (%)</span>
<span class="t" style="top:177.00px;font-size:8.2px;color:#5a7d9a;font-weight:700;left:1163.60px;transform:translateX(-50%) scaleX(0.9272);">TOTAL</span>
<svg style="position:absolute;left:18.00px;top:195.08px" width="9.80" height="6.43" viewBox="0 0 16 10.5"><path d="M1.800 1.800L8 8l6.200-6.200" fill="none" stroke="#2f6fb5" stroke-width="3.4" stroke-linecap="round" stroke-linejoin="miter"/></svg>
<span class="t" style="top:194.00px;font-size:8.0px;color:#4c4c4c;left:46.30px;transform:translateX(-50%);">1</span>
<span class="t" style="top:194.00px;font-size:8.0px;color:#4c4c4c;left:89.00px;">RPB</span>
<span class="t" style="top:194.00px;font-size:8.0px;color:#4c4c4c;left:304.40px;transform:scaleX(0.9425);transform-origin:0 50%;">WINDSHIELD REPLACEMENT</span>
<span class="t" style="top:194.00px;font-size:8.0px;color:#4c4c4c;right:357.00px;">1.00</span>
<span class="t" style="top:194.00px;font-size:8.0px;color:#4c4c4c;right:190.20px;">139.95</span>
<span class="t" style="top:194.00px;font-size:8.0px;color:#4c4c4c;right:118.00px;">0.00</span>
<span class="t" style="top:194.00px;font-size:8.0px;color:#4c4c4c;right:21.80px;">139.95</span>
<span class="t" style="top:210.00px;font-size:8.0px;color:#4c4c4c;left:44.50px;transform:scaleX(0.8809);transform-origin:0 50%;">1.1</span>
<svg style="position:absolute;left:89.00px;top:210.20px" width="6.40" height="6.40" viewBox="0 0 16 16"><path fill="#222" d="M0 0h7.200L16 8.800 8.800 16 0 7.200z"/><circle cx="3.800" cy="3.800" r="1.700" fill="#fff"/></svg>
<span class="t" style="top:210.00px;font-size:8.0px;color:#4c4c4c;left:304.40px;transform:scaleX(0.9651);transform-origin:0 50%;">WINDSHIELD INSTALLATION</span>
<span class="t" style="top:210.00px;font-size:8.0px;color:#333;left:863.50px;transform:translateX(-50%) scaleX(0.8000);">---</span>
<span class="t" style="top:210.00px;font-size:8.0px;color:#333;right:190.20px;transform:scaleX(0.8000);transform-origin:100% 50%;">---</span>
<span class="t" style="top:210.00px;font-size:8.0px;color:#333;right:118.00px;transform:scaleX(0.8000);transform-origin:100% 50%;">---</span>
<span class="t" style="top:210.00px;font-size:8.0px;color:#333;right:21.80px;transform:scaleX(0.8000);transform-origin:100% 50%;">---</span>
<span class="t" style="top:226.00px;font-size:8.0px;color:#4c4c4c;left:44.50px;transform:scaleX(0.8809);transform-origin:0 50%;">1.2</span>
<span class="t" style="top:226.00px;font-size:8.0px;color:#4c4c4c;left:89.00px;">ER</span>
<span class="t" style="top:226.00px;font-size:8.0px;color:#4c4c4c;left:304.40px;transform:scaleX(0.9360);transform-origin:0 50%;">URETHANE</span>
<span class="t" style="top:226.00px;font-size:8.0px;color:#4c4c4c;right:357.00px;">1.00</span>
<span class="t" style="top:226.00px;font-size:8.0px;color:#3d74b8;font-weight:700;right:320.60px;">(72)</span>
<span class="t" style="top:226.00px;font-size:8.0px;color:#4c4c4c;right:190.20px;">20.35</span>
<span class="t" style="top:226.00px;font-size:8.0px;color:#4c4c4c;right:118.00px;">0.00</span>
<span class="t" style="top:226.00px;font-size:8.0px;color:#4c4c4c;right:21.80px;">20.35</span>
<span class="t" style="top:242.00px;font-size:8.0px;color:#4c4c4c;left:44.50px;transform:scaleX(0.8809);transform-origin:0 50%;">1.3</span>
<span class="t" style="top:242.00px;font-size:8.0px;color:#4c4c4c;left:89.00px;">PR</span>
<span class="t" style="top:242.00px;font-size:8.0px;color:#b23b3b;font-weight:700;left:304.40px;transform:scaleX(0.9510);transform-origin:0 50%;">PRIMER</span>
<span class="t" style="top:242.00px;font-size:8.0px;color:#b23b3b;font-weight:700;right:357.00px;">1.00</span>
<span class="t" style="top:242.00px;font-size:8.0px;color:#b23b3b;font-weight:700;right:320.60px;">(-2)</span>
<span class="t" style="top:242.00px;font-size:8.0px;color:#b23b3b;font-weight:700;right:190.20px;">4.03</span>
<span class="t" style="top:242.00px;font-size:8.0px;color:#4c4c4c;right:118.00px;">0.00</span>
<span class="t" style="top:242.00px;font-size:8.0px;color:#4c4c4c;right:21.80px;">4.03</span>
<span class="t" style="top:258.00px;font-size:8.0px;color:#4c4c4c;left:44.50px;transform:scaleX(0.8809);transform-origin:0 50%;">1.4</span>
<span class="t" style="top:258.00px;font-size:8.0px;color:#4c4c4c;left:89.00px;">ACT</span>
<span class="t" style="top:258.00px;font-size:8.0px;color:#b23b3b;font-weight:700;left:304.40px;transform:scaleX(0.9615);transform-origin:0 50%;">ACTIVATOR</span>
<span class="t" style="top:258.00px;font-size:8.0px;color:#b23b3b;font-weight:700;right:357.00px;">1.00</span>
<span class="t" style="top:258.00px;font-size:8.0px;color:#b23b3b;font-weight:700;right:320.60px;">(-24)</span>
<span class="t" style="top:258.00px;font-size:8.0px;color:#b23b3b;font-weight:700;right:190.20px;">4.03</span>
<span class="t" style="top:258.00px;font-size:8.0px;color:#4c4c4c;right:118.00px;">0.00</span>
<span class="t" style="top:258.00px;font-size:8.0px;color:#4c4c4c;right:21.80px;">4.03</span>
<span class="t" style="top:274.00px;font-size:8.0px;color:#4c4c4c;left:44.50px;transform:scaleX(0.8809);transform-origin:0 50%;">1.5</span>
<span class="t" style="top:274.00px;font-size:8.0px;color:#4c4c4c;left:89.00px;">DASS</span>
<span class="t" style="top:274.00px;font-size:8.0px;color:#4c4c4c;left:304.40px;transform:scaleX(0.9248);transform-origin:0 50%;">INSURRANCE FILE</span>
<span class="t" style="top:274.00px;font-size:8.0px;color:#4c4c4c;right:357.00px;">1.00</span>
<span class="t" style="top:274.00px;font-size:8.0px;color:#3d74b8;font-weight:700;right:320.60px;">(0)</span>
<span class="t" style="top:274.00px;font-size:8.0px;color:#4c4c4c;right:190.20px;">0.00</span>
<span class="t" style="top:274.00px;font-size:8.0px;color:#4c4c4c;right:118.00px;">0.00</span>
<span class="t" style="top:274.00px;font-size:8.0px;color:#4c4c4c;right:21.80px;">0.00</span>
<span class="t" style="top:290.00px;font-size:8.0px;color:#4c4c4c;left:44.50px;transform:scaleX(0.8809);transform-origin:0 50%;">1.6</span>
<span class="t" style="top:290.00px;font-size:8.0px;color:#4c4c4c;left:89.00px;">F</span>
<span class="t" style="top:290.00px;font-size:8.0px;color:#4a3a5a;left:303.40px;transform:scaleX(0.9785);transform-origin:0 50%;">DEDUCTIBLE</span>
<span class="t" style="top:290.00px;font-size:8.0px;color:#4c4c4c;right:357.00px;">-1.00</span>
<span class="t" style="top:290.00px;font-size:8.0px;color:#3d74b8;font-weight:700;right:320.60px;">(13)</span>
<span class="t" style="top:290.00px;font-size:8.0px;color:#4c4c4c;right:190.20px;">50.00</span>
<span class="t" style="top:290.00px;font-size:8.0px;color:#4c4c4c;right:118.00px;">0.00</span>
<span class="t" style="top:290.00px;font-size:8.0px;color:#4c4c4c;right:21.80px;">-50.00</span>
<span class="t" style="top:356.00px;font-size:5.3px;color:#333;font-style:italic;left:419.30px;transform:scaleX(1.1442);transform-origin:0 50%;">= Jobs to do</span>
<span class="t" style="top:356.00px;font-size:5.3px;color:#333;font-style:italic;left:465.00px;transform:scaleX(1.1549);transform-origin:0 50%;">= Added from time control</span>
<span class="t" style="top:356.00px;font-size:5.3px;color:#333;font-style:italic;left:547.40px;transform:scaleX(1.1503);transform-origin:0 50%;">= Proposed and reported/refused</span>
<span class="t" style="top:356.00px;font-size:5.3px;color:#333;font-style:italic;left:648.70px;transform:scaleX(1.1362);transform-origin:0 50%;">= Expected time exceeded</span>
<span class="t" style="top:356.00px;font-size:5.3px;color:#333;font-style:italic;left:731.50px;transform:scaleX(1.1574);transform-origin:0 50%;">= An error is present on this line</span>
<svg style="position:absolute;left:405px;top:350px" width="330" height="12" viewBox="405 350 330 12"><rect x="411.3" y="353.200" width="5.600" height="5" fill="#a9d1f2" stroke="#777" stroke-width=".8"/><rect x="456.4" y="353.200" width="5.600" height="5" fill="#c5dd9c" stroke="#777" stroke-width=".8"/><rect x="539.8" y="353.200" width="5.600" height="5" fill="#fbd878" stroke="#777" stroke-width=".8"/><rect x="641.4" y="353.200" width="5.600" height="5" fill="#e4e4e4" stroke="#777" stroke-width=".8"/><rect x="723.6" y="353.200" width="5.600" height="5" fill="#f0908a" stroke="#777" stroke-width=".8"/></svg>
<svg style="position:absolute;left:19.00px;top:372.34px" width="8.20" height="4.92" viewBox="0 0 16 9.6"><path d="M1.800 8.200L8 2l6.200 6.200" fill="none" stroke="#a9b7c0" stroke-width="3.2"/></svg>
<svg style="position:absolute;left:68.60px;top:372.54px" width="8.20" height="4.92" viewBox="0 0 16 9.6"><path d="M1.800 1.400L8 7.600l6.200-6.200" fill="none" stroke="#a9b7c0" stroke-width="3.2"/></svg>
<span class="t" style="top:371.00px;font-size:7.0px;color:#8a8a8a;left:96.60px;transform:scaleX(0.9852);transform-origin:0 50%;">Write to see suggestions</span>
<svg style="position:absolute;left:251.70px;top:370.25px" width="9.00" height="9.00" viewBox="0 0 16 16"><circle cx="6.7" cy="6.7" r="5.2" fill="none" stroke="#fff" stroke-width="2.9"/><path d="M10.8 10.8L14.4 14.4" fill="none" stroke="#fff" stroke-width="3.2" stroke-linecap="round"/></svg>
<svg style="position:absolute;left:283.00px;top:370.80px" width="7.20" height="7.20" viewBox="0 0 16 16"><path fill="#a9b7c0" d="M0 0h7.200L16 8.800 8.800 16 0 7.200z"/><circle cx="3.800" cy="3.800" r="1.700" fill="#f5f7f9"/></svg>
<span class="t" style="top:371.00px;font-size:7.0px;color:#8a8a8a;left:310.00px;transform:scaleX(1.0110);transform-origin:0 50%;">Description</span>
<svg style="position:absolute;left:794.60px;top:370.50px" width="8.00" height="8.00" viewBox="0 0 16 16"><circle cx="8" cy="8" r="3.800" fill="none" stroke="#b4c0c8" stroke-width="3"/><circle cx="8" cy="8" r="6.400" fill="none" stroke="#b4c0c8" stroke-width="3.2" stroke-dasharray="2.700 2.327"/></svg>
<span class="t" style="top:371.00px;font-size:7.0px;color:#555;left:864.30px;transform:translateX(-50%);">1</span>
<span class="t" style="top:371.00px;font-size:7.0px;color:#555;right:241.00px;">0</span>
<span class="t" style="top:370.00px;font-size:10px;color:#a9b9c3;font-weight:700;left:1008.20px;transform:translateX(-50%) scaleX(0.9207);">%</span>
<svg style="position:absolute;left:1027.60px;top:371.65px" width="10.00" height="6.50" viewBox="0 0 16 10.4"><rect x=".8" y=".8" width="14.400" height="8.800" fill="none" stroke="#b4c1c9" stroke-width="1.6"/><ellipse cx="8" cy="5.200" rx="2.200" ry="2.800" fill="none" stroke="#b4c1c9" stroke-width="1.4"/><path d="M3.400 3v4.400M12.600 3v4.400" fill="none" stroke="#b4c1c9" stroke-width="1.1"/></svg>
<span class="t" style="top:371.00px;font-size:7.0px;color:#555;right:121.60px;">0</span>
<span class="t" style="top:370.00px;font-size:10px;color:#a9b9c3;left:1128.20px;transform:translateX(-50%);">$</span>
<span class="t" style="top:371.00px;font-size:7.0px;color:#555;right:25.00px;">0</span>
<span class="t" style="top:393.00px;font-size:11px;color:#9db894;font-weight:700;left:56.15px;transform:translateX(-50%);">F5</span>
<svg style="position:absolute;left:66.25px;top:394.00px" width="8.60" height="8.60" viewBox="0 0 16 16"><path fill="#9db894" d="M5.7 0h4.6v5.7H16v4.6h-5.700V16H5.700v-5.700H0V5.700h5.700z"/></svg>
<span class="t" style="top:407.00px;font-size:5.8px;color:#8aa881;left:62.35px;transform:translateX(-50%);">Add</span>
<span class="t" style="top:393.00px;font-size:11px;color:#d99a9a;font-weight:700;left:155.60px;transform:translateX(-50%);">F6</span>
<svg style="position:absolute;left:165.70px;top:397.12px" width="8.60" height="2.37" viewBox="0 0 16 4.4"><rect fill="#d99a9a" x="0" y="0" width="16" height="4.400" rx=".8"/></svg>
<span class="t" style="top:407.00px;font-size:5.8px;color:#c67f7f;left:161.80px;transform:translateX(-50%);">Delete</span>
<span class="t" style="top:393.00px;font-size:11px;color:#a4c0e2;font-weight:700;left:255.75px;transform:translateX(-50%);">F7</span>
<svg style="position:absolute;left:265.85px;top:394.00px" width="8.60" height="8.60" viewBox="0 0 16 16"><circle cx="8" cy="8" r="8" fill="#a4c0e2"/><path d="M3.400 3.600c1.700.5 2.400 1.700 1.900 3.100S3.400 9 4.400 10.400s1.900 2.400 1.400 4.300M10.800 1.400c-1 1.400-.5 2.900 1 3.400s2.900.5 3.600 1.900" stroke="#fafbfc" stroke-width="1.700" fill="none"/></svg>
<span class="t" style="top:407.00px;font-size:5.8px;color:#86a8d2;left:261.95px;transform:translateX(-50%);">Parts</span>
<svg style="position:absolute;left:357.7px;top:397.2px" width="12.200" height="11.800" viewBox="0 0 12.200 11.800"><path d="M6.100 11.600C3 8.400.6 6.800.6 4.900a5.500 4.700 0 0 1 11 0c0 1.900-2.400 3.500-5.500 6.700z" fill="#b9da86"/><ellipse cx="6.100" cy="4.700" rx="2" ry="1.900" fill="#fff"/></svg>
<span class="t" style="top:393.00px;font-size:13.4px;color:#969696;font-weight:700;font-style:italic;left:360.50px;transform:translateX(-50%) scaleX(1.0622);font-family:'DejaVu Sans','Liberation Sans',sans-serif;-webkit-text-stroke:.55px #969696;">Stox</span>
<span class="t" style="top:393.00px;font-size:2.3px;color:#a9cf78;font-weight:700;left:370.20px;transform:translateX(-50%) scaleX(1.3826);">DESTINATION</span>
<svg style="position:absolute;left:383px;top:409px" width="2" height="4" viewBox="0 0 2 4"><path d="M2 0v4H0z" fill="#c5e09a"/></svg>
<svg style="position:absolute;left:40.95px;top:421.80px" width="9.60" height="9.60" viewBox="0 0 16 16"><path d="M2.400 13.600L9 7" fill="none" stroke="#93b08c" stroke-width="3.4" stroke-linecap="round"/><path fill="#93b08c" d="M15.700 3.600a4.800 4.800 0 1 1-3.300-3.300L9.600 3.200l.7 2.500 2.500.7z"/></svg>
<span class="t" style="top:436.00px;font-size:5.8px;color:#8aa881;left:45.75px;transform:translateX(-50%);">Jobs</span>
<svg style="position:absolute;left:107.55px;top:422.49px" width="9.40" height="8.22" viewBox="0 0 16 14"><rect fill="#93b08c" x="0.0" y="0.0" width="4.600" height="4" rx=".5"/><rect fill="#93b08c" x="0.0" y="5.0" width="4.600" height="4" rx=".5"/><rect fill="#93b08c" x="0.0" y="10.0" width="4.600" height="4" rx=".5"/><rect fill="#93b08c" x="5.7" y="0.0" width="4.600" height="4" rx=".5"/><rect fill="#93b08c" x="5.7" y="5.0" width="4.600" height="4" rx=".5"/><rect fill="#93b08c" x="5.7" y="10.0" width="4.600" height="4" rx=".5"/><rect fill="#93b08c" x="11.4" y="0.0" width="4.600" height="4" rx=".5"/><rect fill="#93b08c" x="11.4" y="5.0" width="4.600" height="4" rx=".5"/><rect fill="#93b08c" x="11.4" y="10.0" width="4.600" height="4" rx=".5"/></svg>
<span class="t" style="top:436.00px;font-size:5.8px;color:#8aa881;left:112.25px;transform:translateX(-50%);">Packages</span>
<svg style="position:absolute;left:173.00px;top:422.03px" width="11.60" height="9.13" viewBox="0 0 16 12.6"><path fill="#93b08c" d="M3.200 0h9.600l1.800 4.800c.8.200 1.400.9 1.400 1.800v4h-1.600v2H11.800v-2H4.200v2H1.600v-2H0v-4c0-.9.600-1.600 1.400-1.800zM4.400 1.800L3.400 4.800h9.200l-1-3z"/><circle cx="3" cy="7.600" r="1.300" fill="#fafbfc"/><circle cx="13" cy="7.600" r="1.300" fill="#fafbfc"/></svg>
<span class="t" style="top:436.00px;font-size:5.8px;color:#8aa881;left:178.80px;transform:translateX(-50%);">Vehicles</span>
<svg style="position:absolute;left:240.90px;top:422.10px" width="9.00" height="9.00" viewBox="0 0 16 16"><circle cx="8" cy="8" r="6.900" fill="none" stroke="#93b08c" stroke-width="2.2"/></svg>
<span class="t" style="top:436.00px;font-size:5.8px;color:#8aa881;left:245.40px;transform:translateX(-50%);">Tires</span>
<svg style="position:absolute;left:306.50px;top:422.49px" width="10.60" height="8.21" viewBox="0 0 16 12.4"><path fill="#93b08c" d="M8 0a8 8 0 0 1 6.800 12.400H1.200A8 8 0 0 1 8 0z"/><circle cx="3.400" cy="7.800" r="1.100" fill="#fafbfc"/><circle cx="5" cy="4" r="1.100" fill="#fafbfc"/><circle cx="11" cy="4" r="1.100" fill="#fafbfc"/><circle cx="12.600" cy="7.800" r="1.100" fill="#fafbfc"/><path d="M7.600 10.400L9.200 3.600" stroke="#fafbfc" stroke-width="1.500"/></svg>
<span class="t" style="top:436.00px;font-size:5.8px;color:#8aa881;left:311.80px;transform:translateX(-50%);">Fuel</span>
<svg style="position:absolute;left:372.90px;top:422.05px" width="10.40" height="9.10" viewBox="0 0 16 14"><path fill="#fff" d="M4.400 0h10.800c.6 0 .9.500.7 1L12.800 11.400c-.2.500-.7.900-1.300.9H1.800c-.7 0-1.100-.6-.9-1.200L3.700.8C3.800.4 4 0 4.400 0z"/><path d="M6 3.200h6.600M5.400 5.400h6.600" stroke="#a3d2f8" stroke-width="1"/><path fill="#fff" d="M.2 11.800c0 1.300.9 2.200 2 2.200h9.600l.7-1.200H2.400c-.5 0-.9-.4-.9-.9z"/></svg>
<span class="t" style="top:436.00px;font-size:5.8px;color:#fff;font-weight:700;left:378.10px;transform:translateX(-50%);">Reminders</span>
<span class="t" style="top:391.00px;font-size:8.2px;color:#222;left:415.20px;transform:scaleX(0.9119);transform-origin:0 50%;">Message on invoice</span>
<svg style="position:absolute;left:795.95px;top:392.18px" width="9.70" height="8.24" viewBox="0 0 16 13.6"><ellipse cx="8" cy="5.800" rx="7.200" ry="5" fill="none" stroke="#5b7f96" stroke-width="1.5"/><path d="M4 9.600l-2 3.400 5-2.200" fill="none" stroke="#5b7f96" stroke-width="1.4" fill="#f5f7f9"/></svg>
<svg style="position:absolute;left:800.6px;top:435.8px" width="11" height="10" viewBox="0 0 11 10"><path d="M.6 9.400L9.800.6M5.600 9.400L10.200 5" stroke="#222" stroke-width="1.300" fill="none"/></svg>
<span class="t" style="top:402.00px;font-size:7.8px;color:#111;right:346.20px;transform:scaleX(0.9669);transform-origin:100% 50%;">Parts</span>
<span class="t" style="top:403.00px;font-size:7.0px;color:#555;right:284.60px;transform:scaleX(1.0172);transform-origin:100% 50%;">-21.59</span>
<span class="t" style="top:417.00px;font-size:7.8px;color:#111;right:346.20px;transform:scaleX(0.9688);transform-origin:100% 50%;">Service(s)</span>
<span class="t" style="top:418.00px;font-size:7.0px;color:#3a6fb7;right:284.60px;transform:scaleX(1.0083);transform-origin:100% 50%;">139.95</span>
<span class="t" style="top:432.00px;font-size:10px;color:#a9b9c3;left:851.60px;transform:translateX(-50%);">$</span>
<svg style="position:absolute;left:911.60px;top:432.00px" width="9.20" height="9.20" viewBox="0 0 16 16"><path fill="#5b7383" d="M6.800 1.800V9.200l5.200 5.200A7.100 7.100 0 1 1 6.800 1.800z"/><path fill="#5b7383" d="M8.600 0A7.400 7.400 0 0 1 16 7.400H8.600z"/><path fill="#5b7383" d="M9.600 9.200H16a7.200 7.200 0 0 1-2 4.400z"/></svg>
<span class="t" style="top:402.00px;font-size:7.8px;color:#111;right:212.00px;transform:scaleX(0.9921);transform-origin:100% 50%;">Subtotal</span>
<span class="t" style="top:403.00px;font-size:7.0px;color:#555;right:19.00px;">118.36</span>
<span class="t" style="top:417.00px;font-size:7.8px;color:#111;right:212.00px;transform:scaleX(1.0070);transform-origin:100% 50%;">Total</span>
<span class="t" style="top:418.00px;font-size:7.0px;color:#555;right:19.00px;">118.36</span>
<span class="t" style="top:453.00px;font-size:10.6px;color:#fff;font-weight:700;left:26.80px;transform:scaleX(1.0183);transform-origin:0 50%;">F12</span>
<svg style="position:absolute;left:48.60px;top:454.35px" width="7.70" height="7.70" viewBox="0 0 16 16"><path d="M2.200 2.200L13.800 13.800M13.800 2.200L2.200 13.800" fill="none" stroke="#fff" stroke-width="4.4" stroke-linecap="round"/></svg>
<span class="t" style="top:467.00px;font-size:5.5px;color:#fff;font-weight:700;left:41.55px;transform:translateX(-50%) scaleX(0.9610);">Exit</span>
<svg style="position:absolute;left:97.85px;top:453.60px" width="9.20" height="9.20" viewBox="0 0 16 16"><circle cx="8" cy="8" r="7" fill="none" stroke="#546c7a" stroke-width="2"/><path d="M8 3.600V8.600H4.600" fill="none" stroke="#546c7a" stroke-width="1.8"/></svg>
<span class="t" style="top:467.00px;font-size:5.5px;color:#44545e;left:102.45px;transform:translateX(-50%) scaleX(1.1310);">Time control</span>
<span class="t" style="top:453.00px;font-size:10.6px;color:#3b74ba;font-weight:700;left:151.20px;transform:scaleX(0.8727);transform-origin:0 50%;">F1</span>
<svg style="position:absolute;left:165.20px;top:453.95px" width="8.50" height="8.50" viewBox="0 0 16 16"><path fill="#546c7a" d="M5.7 0h4.6v5.7H16v4.6h-5.700V16H5.700v-5.700H0V5.700h5.700z"/></svg>
<span class="t" style="top:467.00px;font-size:5.5px;color:#44545e;left:162.45px;transform:translateX(-50%) scaleX(1.0961);">New sale</span>
<span class="t" style="top:453.00px;font-size:10.6px;color:#3b74ba;font-weight:700;left:209.75px;transform:scaleX(1.0020);transform-origin:0 50%;">F9</span>
<svg style="position:absolute;left:225.35px;top:453.25px" width="9.90" height="9.90" viewBox="0 0 16 16"><rect x=".9" y="2.900" width="14.200" height="12.200" fill="none" stroke="#546c7a" stroke-width="1.8"/><path d="M.9 6.400h14.200M4.600 6.400v8.700M8 6.400v8.700M11.400 6.400v8.700M.9 9.400h14.200M.9 12.300h14.200" fill="none" stroke="#546c7a" stroke-width="1.1"/><rect fill="#546c7a" x="3.200" y="0" width="2.400" height="4.800" rx="1.200"/><rect fill="#546c7a" x="10.400" y="0" width="2.400" height="4.800" rx="1.200"/></svg>
<span class="t" style="top:467.00px;font-size:5.5px;color:#44545e;left:222.50px;transform:translateX(-50%) scaleX(1.0883);">Calendar</span>
<span class="t" style="top:453.00px;font-size:10.6px;color:#3b74ba;font-weight:700;left:268.15px;transform:scaleX(1.0183);transform-origin:0 50%;">F10</span>
<svg style="position:absolute;left:289.95px;top:454.31px" width="6.80" height="7.77" viewBox="0 0 14 16"><rect fill="#546c7a" x="0" y="7" width="14" height="9" rx="1.200"/><path d="M3 7.400V5a4 4 0 0 1 8 0v2.400" fill="none" stroke="#546c7a" stroke-width="2.4"/></svg>
<span class="t" style="top:467.00px;font-size:5.5px;color:#44545e;left:282.45px;transform:translateX(-50%) scaleX(1.1312);">Checkout</span>
<svg style="position:absolute;left:337.55px;top:453.10px" width="10.20" height="10.20" viewBox="0 0 16 16"><path d="M2.400 13.600L9 7" fill="none" stroke="#546c7a" stroke-width="3.4" stroke-linecap="round"/><path fill="#546c7a" d="M15.700 3.600a4.800 4.800 0 1 1-3.300-3.300L9.600 3.200l.7 2.500 2.500.7z"/></svg>
<span class="t" style="top:467.00px;font-size:5.5px;color:#44545e;left:342.65px;transform:translateX(-50%) scaleX(1.1241);">Maintenances</span>
<svg style="position:absolute;left:397.05px;top:453.12px" width="12.90" height="10.16" viewBox="0 0 16 12.6"><path fill="#546c7a" d="M3.200 0h9.600l1.800 4.800c.8.200 1.400.9 1.400 1.800v4h-1.600v2H11.800v-2H4.200v2H1.600v-2H0v-4c0-.9.600-1.600 1.400-1.800zM4.400 1.800L3.400 4.800h9.200l-1-3z"/><circle cx="3" cy="7.600" r="1.300" fill="#f5f7f9"/><circle cx="13" cy="7.600" r="1.300" fill="#f5f7f9"/></svg>
<span class="t" style="top:467.00px;font-size:5.5px;color:#44545e;left:403.50px;transform:translateX(-50%) scaleX(1.1109);">Car lot</span>
<svg style="position:absolute;left:457.85px;top:453.90px" width="11.10" height="8.60" viewBox="0 0 16 12.4"><rect x=".7" y=".7" width="14.600" height="11" rx="1.200" fill="none" stroke="#546c7a" stroke-width="1.4"/><path d="M1 2.600L8 8l7-5.400" fill="none" stroke="#546c7a" stroke-width="1.4"/></svg>
<span class="t" style="top:467.00px;font-size:5.5px;color:#44545e;left:463.40px;transform:translateX(-50%) scaleX(1.0905);">Follow-ups</span>
<svg style="position:absolute;left:518.05px;top:453.38px" width="10.70" height="9.63" viewBox="0 0 16 14.4"><rect fill="#546c7a" x="0" y="0" width="16" height="4"/><path fill="#546c7a" d="M1 4.900h14v9.500H1z"/><rect x="5.600" y="6.600" width="4.800" height="1.800" rx=".9" fill="#f5f7f9"/></svg>
<span class="t" style="top:467.00px;font-size:5.5px;color:#44545e;left:523.40px;transform:translateX(-50%) scaleX(1.0900);">Storage</span>
<svg style="position:absolute;left:579.05px;top:453.20px" width="10.00" height="10.00" viewBox="0 0 16 16"><path d="M3.600 4.600A6.200 6.200 0 1 1 1.900 10.400" fill="none" stroke="#fff" stroke-width="3"/><path fill="#fff" d="M0 0l7 6.600H0z"/></svg>
<span class="t" style="top:467.00px;font-size:5.5px;color:#fff;font-weight:700;left:584.05px;transform:translateX(-50%) scaleX(1.0442);">Returns</span>
<svg style="position:absolute;left:638.10px;top:453.97px" width="13.00" height="8.45" viewBox="0 0 16 10.4"><rect x="0" y="0" width="16" height="10.400" rx=".8" fill="#fff"/><ellipse cx="8" cy="5.200" rx="2.300" ry="3.100" fill="none" stroke="#e03e2f" stroke-width="1.500"/><path d="M3.200 2.600v5.200M12.800 2.600v5.200" stroke="#e03e2f" stroke-width="1.400"/></svg>
<span class="t" style="top:467.00px;font-size:5.5px;color:#fff;font-weight:700;left:644.60px;transform:translateX(-50%) scaleX(1.0436);">Receivables</span>
<svg style="position:absolute;left:698.60px;top:453.22px" width="11.90" height="9.97" viewBox="0 0 16 13.4"><rect fill="#fff" x="0" y="0.0" width="16" height="2.700"/><rect fill="#fff" x="0" y="3.5" width="16" height="2.700"/><rect fill="#fff" x="0" y="7.0" width="16" height="2.700"/><rect fill="#fff" x="0" y="10.5" width="16" height="2.700"/></svg>
<span class="t" style="top:467.00px;font-size:5.5px;color:#fff;font-weight:700;left:704.55px;transform:translateX(-50%) scaleX(1.0341);">History</span>
<svg style="position:absolute;left:759.05px;top:452.80px" width="10.80" height="10.80" viewBox="0 0 16 16"><path d="M5.600 4.200h6l3.400 3.400v7.600H5.600z" fill="none" stroke="#546c7a" stroke-width="1.2"/><path d="M5.400 11H.9V3.600L3.600.8h5.600v3.200" fill="none" stroke="#546c7a" stroke-width="1.2"/><path d="M3.800.8v3H.9M11.400 4.400v3.400h3.400" fill="none" stroke="#546c7a" stroke-width="1"/></svg>
<span class="t" style="top:467.00px;font-size:5.5px;color:#44545e;left:764.45px;transform:translateX(-50%) scaleX(1.1335);">Duplicate</span>
<svg style="position:absolute;left:819.40px;top:453.15px" width="10.10" height="10.10" viewBox="0 0 16 16"><path d="M14.200 9.600a6.400 6.400 0 0 1-11.600 2.600" fill="none" stroke="#546c7a" stroke-width="2.6"/><path d="M1.800 6.400a6.400 6.400 0 0 1 11.600-2.600" fill="none" stroke="#546c7a" stroke-width="2.6"/><path fill="#546c7a" d="M16 0v6.400H9.600z"/><path fill="#546c7a" d="M0 16V9.600h6.400z"/></svg>
<span class="t" style="top:467.00px;font-size:5.5px;color:#44545e;left:824.45px;transform:translateX(-50%) scaleX(1.0349);">Reverse</span>
<span class="t" style="top:453.00px;font-size:12.4px;color:#b0bdc6;font-weight:700;left:885.50px;transform:translateX(-50%) scaleX(0.8431);">%</span>
<span class="t" style="top:467.00px;font-size:5.5px;color:#b8c4cc;left:885.50px;transform:translateX(-50%) scaleX(1.1046);">Subdivide</span>
<span class="t" style="top:453.00px;font-size:10.8px;color:#546c7a;font-weight:700;left:945.65px;transform:translateX(-50%) scaleX(0.9381);">?</span>
<span class="t" style="top:467.00px;font-size:5.5px;color:#44545e;left:945.65px;transform:translateX(-50%) scaleX(1.0696);">Help</span>
<svg style="position:absolute;left:999.45px;top:453.81px" width="12.10" height="8.77" viewBox="0 0 16 11.6"><path fill="#fff" d="M5.400 0H16v9h-1.400a2.200 2.200 0 0 0-4.400 0H6.600a2.200 2.200 0 0 0-4.400 0H0V5l2.400-2.800h3zM1.500 5h3.700V3.300H3z"/><circle cx="4.400" cy="9.600" r="1.800" fill="#fff"/><circle cx="12.400" cy="9.600" r="1.800" fill="#fff"/></svg>
<span class="t" style="top:467.00px;font-size:5.5px;color:#fff;font-weight:700;left:1005.50px;transform:translateX(-50%) scaleX(0.9764);">Delivery</span>
<span class="t" style="top:453.00px;font-size:10.6px;color:#fff;font-weight:700;left:1049.35px;transform:scaleX(1.0242);transform-origin:0 50%;">F11</span>
<svg style="position:absolute;left:1070.65px;top:452.70px" width="11.00" height="11.00" viewBox="0 0 16 16"><path d="M2.400 13.600L9 7" fill="none" stroke="#fff" stroke-width="3.4" stroke-linecap="round"/><path fill="#fff" d="M15.700 3.600a4.800 4.800 0 1 1-3.300-3.300L9.600 3.200l.7 2.500 2.500.7z"/></svg>
<span class="t" style="top:467.00px;font-size:5.5px;color:#fff;font-weight:700;left:1065.50px;transform:translateX(-50%) scaleX(1.0593);">+ Work order</span>
<span class="t" style="top:453.00px;font-size:10.6px;color:#fff;font-weight:700;left:1113.80px;transform:scaleX(0.9859);transform-origin:0 50%;">F2</span>
<svg style="position:absolute;left:1129.20px;top:454.33px" width="8.60" height="7.74" viewBox="0 0 16 14.4"><path d="M1 1h14v8l-4.600 4.400H1z" fill="none" stroke="#fff" stroke-width="2"/><path d="M10.400 13.400V9h4.600" fill="none" stroke="#fff" stroke-width="1.6"/></svg>
<span class="t" style="top:467.00px;font-size:5.5px;color:#fff;font-weight:700;left:1125.80px;transform:translateX(-50%) scaleX(1.0480);">+ Estimate</span>
<span class="t" style="top:453.00px;font-size:10.6px;color:#fff;font-weight:700;left:1173.45px;transform:scaleX(1.0020);transform-origin:0 50%;">F4</span>
<svg style="position:absolute;left:1189.05px;top:453.65px" width="10.40" height="9.10" viewBox="0 0 16 14"><path d="M12 8v3.800c0 .7-.5 1.200-1.200 1.200H2.200C1.500 13 1 12.500 1 11.800V3.400c0-.7.500-1.200 1.200-1.200h8" fill="none" stroke="#fff" stroke-width="2"/><path d="M4.400 6.200l3.200 3.200 7-7.400" fill="none" stroke="#fff" stroke-width="2.8"/></svg>
<span class="t" style="top:467.00px;font-size:5.5px;color:#fff;font-weight:700;left:1186.45px;transform:translateX(-50%) scaleX(0.9766);">Payment</span>
<svg style="position:absolute;left:1080px;top:430px" width="148" height="60" viewBox="1080 430 148 60"><path d="M1086.8 448.800l7.400 7.900-7.400 7.900" fill="none" stroke="#ee2a2e" stroke-width="5.600" stroke-linejoin="round" stroke-linecap="round"/><path d="M1096.5 448.800l7.400 7.900-7.400 7.900" fill="none" stroke="#ee2a2e" stroke-width="5.600" stroke-linejoin="round" stroke-linecap="round"/><path d="M1106.2 448.800l7.400 7.900-7.400 7.900" fill="none" stroke="#ee2a2e" stroke-width="5.600" stroke-linejoin="round" stroke-linecap="round"/><path d="M1115.9 448.800l7.400 7.900-7.400 7.900" fill="none" stroke="#ee2a2e" stroke-width="5.600" stroke-linejoin="round" stroke-linecap="round"/><path d="M1124.600 441.800l15.800 15.300-15.800 15.700" fill="none" stroke="#ee2a2e" stroke-width="11.400" stroke-linejoin="round" stroke-linecap="round"/><rect x="1153.700" y="442.800" width="65.500" height="34.400" rx="6.200" fill="none" stroke="#e8090b" stroke-width="7"/></svg>
</div></body></html>
